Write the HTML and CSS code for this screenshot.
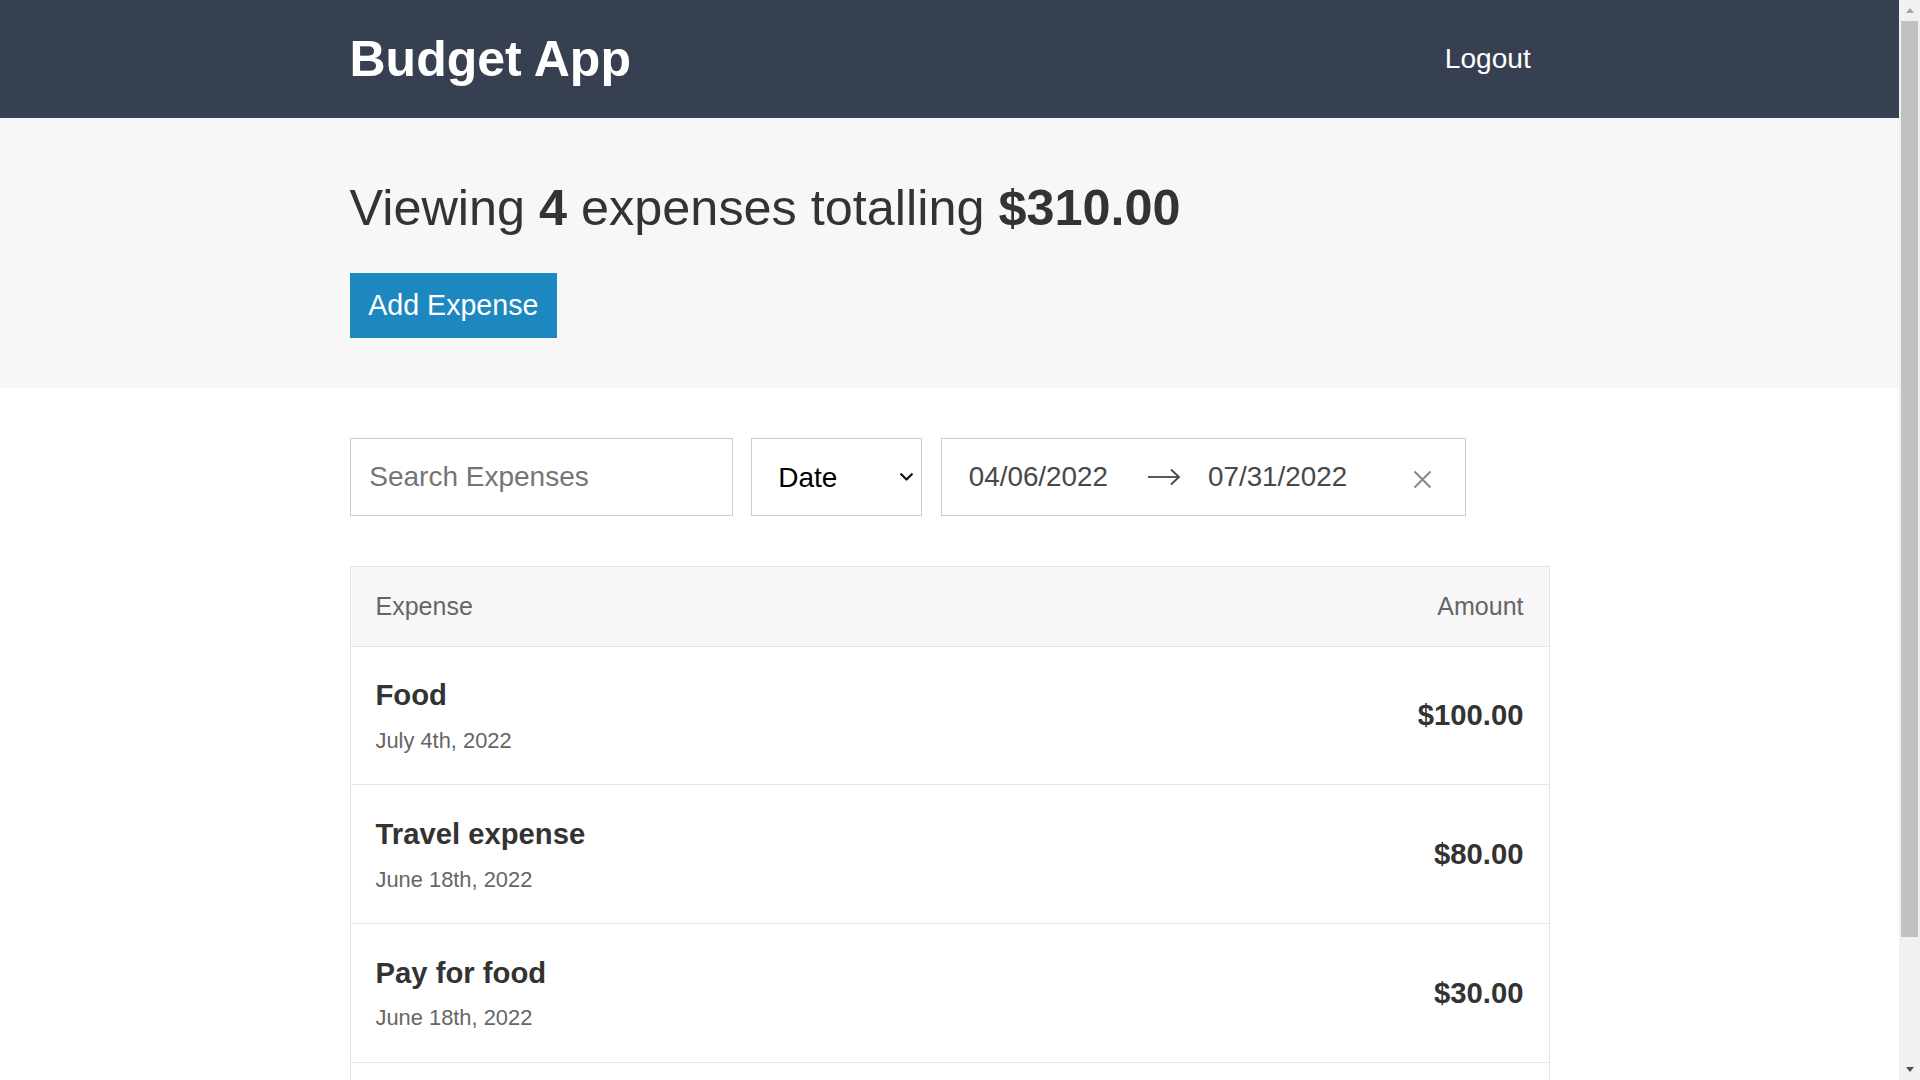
FILE: index.html
```html
<!DOCTYPE html>
<html lang="en">
<head>
<meta charset="utf-8">
<title>Budget App</title>
<link rel="stylesheet" href="styles.css">
</head>
<body>
<header class="header">
  <div class="container header__content">
    <a class="header__title" href="#"><h1>Budget App</h1></a>
    <button class="button button--link" type="button">Logout</button>
  </div>
</header>

<div class="page-header">
  <div class="container">
    <h1 class="page-header__title">Viewing <span>4</span> expenses totalling <span>$310.00</span></h1>
    <div class="page-header__actions">
      <a class="button button--add" href="#">Add Expense</a>
    </div>
  </div>
</div>

<main class="container">
  <div class="input-group">
    <div class="input-group__item">
      <input class="text-input" type="text" placeholder="Search Expenses">
    </div>
    <div class="input-group__item select-wrap">
      <select class="select">
        <option>Date</option>
        <option>Amount</option>
      </select>
      <svg class="select__arrow" width="13" height="8" viewBox="0 0 13 8" aria-hidden="true">
        <polyline points="1.2,1.2 6.5,6.5 11.8,1.2" fill="none" stroke="#111" stroke-width="2.2" stroke-linecap="round" stroke-linejoin="round"/>
      </svg>
    </div>
    <div class="input-group__item date-range">
      <input class="date-range__input" type="text" value="04/06/2022" readonly>
      <svg class="date-range__arrow" width="34" height="20" viewBox="0 0 34 20" aria-hidden="true">
        <line x1="1" y1="10" x2="32" y2="10" stroke="#484848" stroke-width="1.8"/>
        <polyline points="24,2.5 32,10 24,17.5" fill="none" stroke="#484848" stroke-width="1.8"/>
      </svg>
      <input class="date-range__input date-range__input--end" type="text" value="07/31/2022" readonly>
      <button class="date-range__clear" type="button" aria-label="Clear Dates">
        <svg width="19" height="19" viewBox="0 0 19 19" aria-hidden="true">
          <line x1="1.5" y1="1.5" x2="17.5" y2="17.5" stroke="#8a8a8a" stroke-width="2.2"/>
          <line x1="17.5" y1="1.5" x2="1.5" y2="17.5" stroke="#8a8a8a" stroke-width="2.2"/>
        </svg>
      </button>
    </div>
  </div>

  <div class="list-header">
    <div>Expense</div>
    <div>Amount</div>
  </div>
  <div class="list-body">
    <a class="list-item" href="#">
      <div>
        <h3 class="list-item__title">Food</h3>
        <span class="list-item__sub-title">July 4th, 2022</span>
      </div>
      <h3 class="list-item__data">$100.00</h3>
    </a>
    <a class="list-item" href="#">
      <div>
        <h3 class="list-item__title">Travel expense</h3>
        <span class="list-item__sub-title">June 18th, 2022</span>
      </div>
      <h3 class="list-item__data">$80.00</h3>
    </a>
    <a class="list-item" href="#">
      <div>
        <h3 class="list-item__title">Pay for food</h3>
        <span class="list-item__sub-title">June 18th, 2022</span>
      </div>
      <h3 class="list-item__data">$30.00</h3>
    </a>
    <a class="list-item" href="#">
      <div>
        <h3 class="list-item__title">Rent</h3>
        <span class="list-item__sub-title">April 20th, 2022</span>
      </div>
      <h3 class="list-item__data">$100.00</h3>
    </a>
  </div>
</main>

<div class="scrollbar" aria-hidden="true">
  <span class="scrollbar__button"><span class="scrollbar__tri scrollbar__tri--up"></span></span>
  <span class="scrollbar__thumb"></span>
  <span class="scrollbar__button scrollbar__button--down"><span class="scrollbar__tri scrollbar__tri--down"></span></span>
</div>
</body>
</html>
```

FILE: styles.css
```css
* {
  box-sizing: border-box;
}

html {
  font-size: 15.625px;
}

body {
  margin: 0;
  padding-right: 21px;
  font-family: "Liberation Sans", Arial, Helvetica, sans-serif;
  font-size: 25px;
  line-height: 1.6;
  color: #333;
  background: #fff;
}

button {
  cursor: pointer;
  font-family: inherit;
}

.container {
  max-width: 1250px;
  margin: 0 auto;
  padding: 0 25px;
}

/* Fake window scrollbar */
.scrollbar {
  position: fixed;
  top: 0;
  right: 0;
  width: 21px;
  height: 100vh;
  background: #f1f1f1;
  display: flex;
  flex-direction: column;
  align-items: center;
}

.scrollbar__button {
  width: 21px;
  height: 21px;
  flex: none;
  display: flex;
  align-items: center;
  justify-content: center;
}

.scrollbar__button--down {
  margin-top: auto;
}

.scrollbar__tri {
  width: 0;
  height: 0;
  border-left: 4.5px solid transparent;
  border-right: 4.5px solid transparent;
}

.scrollbar__tri--up {
  border-bottom: 5px solid #a3a3a3;
}

.scrollbar__tri--down {
  border-top: 5px solid #505050;
}

.scrollbar__thumb {
  width: 17px;
  height: 916px;
  flex: none;
  background: #c1c1c1;
}

/* Header */
.header {
  background: #364051;
}

.header__content {
  display: flex;
  align-items: center;
  justify-content: space-between;
  padding-top: 18.75px;
  padding-bottom: 18.75px;
}

.header__title {
  color: #fff;
  text-decoration: none;
}

.header__title h1 {
  margin: 0;
  font-size: 50px;
  line-height: 80px;
  font-weight: 700;
}

/* Buttons */
.button {
  display: inline-block;
  background: #1c88bf;
  border: none;
  color: #fff;
  font-size: 28.125px;
  font-weight: 300;
  line-height: 1;
  padding: 18.75px;
  text-decoration: none;
}

.button--add {
  font-size: 28.6px;
  padding: 18.5px 18.75px;
}

.button--link {
  background: none;
}

/* Page header */
.page-header {
  background: #f7f7f7;
  margin-bottom: 50px;
  padding: 50px 0;
}

.page-header__title {
  margin: 0 0 25px 0;
  font-size: 50.4px;
  line-height: 80px;
  font-weight: 300;
}

.page-header__title span {
  font-weight: 700;
}

.page-header__actions {
  display: flex;
}

/* Filters */
.input-group {
  display: flex;
  margin-bottom: 50px;
}

.input-group__item {
  margin-right: 18.75px;
}

.text-input {
  display: block;
  width: 383px;
  height: 78px;
  border: 1px solid #cacccd;
  border-radius: 0;
  padding: 18.75px;
  font-family: inherit;
  font-size: 28px;
  font-weight: 300;
  color: #333;
  outline: none;
}

.text-input::placeholder {
  color: #757575;
}

.select-wrap {
  position: relative;
}

.select {
  display: block;
  width: 171px;
  height: 78px;
  border: 1px solid #cacccd;
  border-radius: 0;
  background: #fff;
  padding: 0 30px 0 26px;
  font-family: inherit;
  font-size: 28px;
  font-weight: 300;
  color: #000;
  -webkit-appearance: none;
  appearance: none;
  outline: none;
}

.select__arrow {
  position: absolute;
  right: 9px;
  top: 35px;
  pointer-events: none;
}

.date-range {
  display: flex;
  align-items: center;
  width: 525px;
  height: 78px;
  border: 1px solid #cacccd;
  background: #fff;
  margin-right: 0;
}

.date-range__input {
  flex: none;
  width: 205px;
  height: 100%;
  border: none;
  background: transparent;
  padding: 0 0 0 26.8px;
  font-family: inherit;
  font-size: 27.8px;
  font-weight: 300;
  color: #484848;
  outline: none;
}

.date-range__input--end {
  width: 180px;
  padding-left: 27px;
}

.date-range__arrow {
  display: block;
  flex: none;
}

.date-range__clear {
  display: flex;
  align-items: center;
  justify-content: center;
  margin-left: auto;
  margin-right: 33px;
  padding: 0;
  width: 19px;
  height: 19px;
  border: none;
  background: none;
  position: relative;
  top: 2px;
}

/* List */
.list-header {
  display: flex;
  justify-content: space-between;
  background: #f7f7f7;
  border: 1px solid #e5e5e5;
  color: #666;
  padding: 19.25px 25px;
}

.list-body {
  margin-bottom: 25px;
}

.list-item {
  display: flex;
  align-items: center;
  justify-content: space-between;
  border: 1px solid #e5e5e5;
  border-top: none;
  color: #333;
  padding: 25.5px 25px;
  text-decoration: none;
}

.list-item__title {
  margin: 0;
  font-size: 29.25px;
  line-height: 1.6;
  font-weight: 700;
}

.list-item__sub-title {
  color: #666;
  font-size: 21.875px;
}

.list-item__data {
  margin: 0;
  padding-left: 18.75px;
  font-size: 29.25px;
  line-height: 1.6;
  font-weight: 700;
}
```
